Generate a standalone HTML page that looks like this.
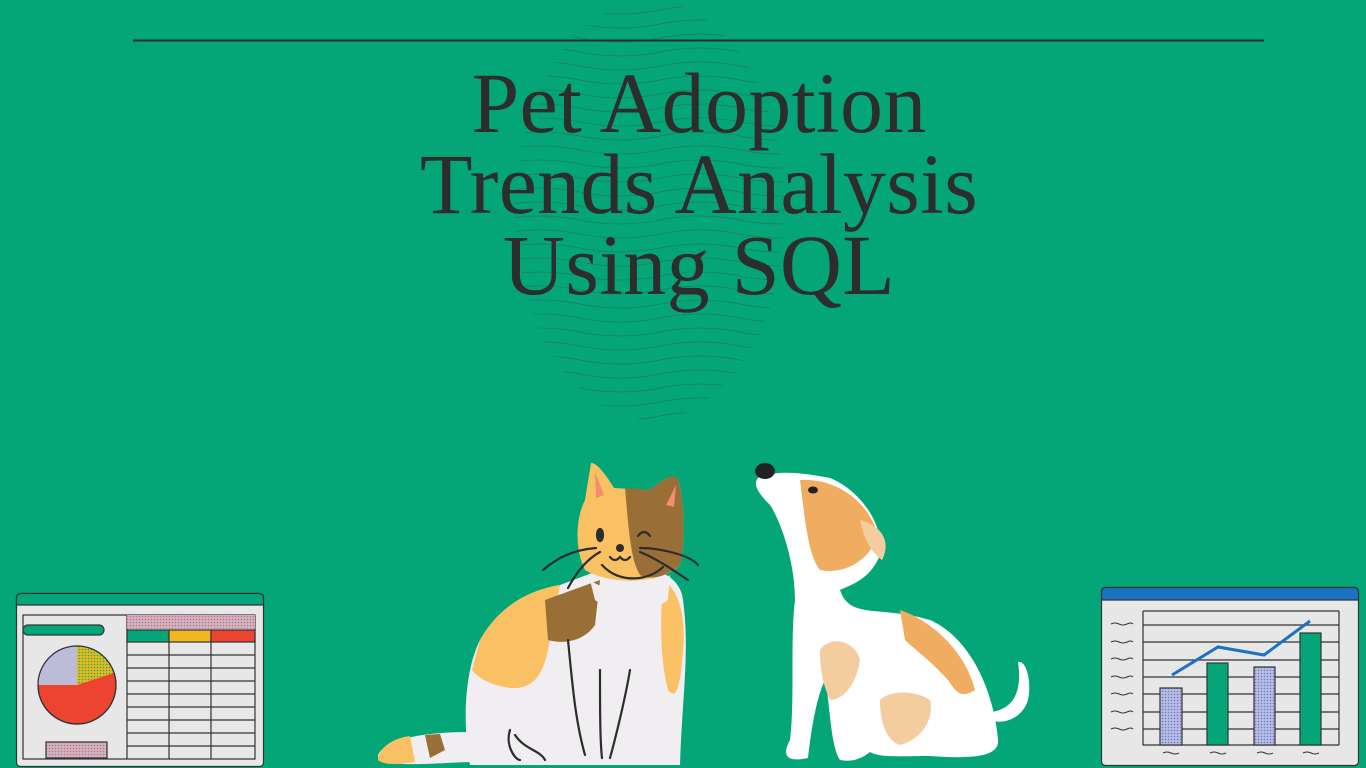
<!DOCTYPE html>
<html><head><meta charset="utf-8"><style>
html,body{margin:0;padding:0}
body{width:1366px;height:768px;background:#04a678;position:relative;overflow:hidden;font-family:"Liberation Serif",serif}
.t{position:absolute;left:16px;width:1366px;text-align:center;color:#2d2d2d;font-size:86px;letter-spacing:0.3px;line-height:1}
svg{position:absolute;left:0;top:0}
</style></head><body>
<svg width="1366" height="768" viewBox="0 0 1366 768">
<defs>
<clipPath id="blob"><ellipse cx="650" cy="210" rx="135" ry="210"/></clipPath>
<pattern id="dots" width="3" height="3" patternUnits="userSpaceOnUse"><rect width="3" height="3" fill="#c8b8c8"/><circle cx="1.5" cy="1.5" r="0.8" fill="#e06070"/></pattern>
<pattern id="dots2" width="3" height="3" patternUnits="userSpaceOnUse"><rect width="3" height="3" fill="#b8bde0"/><circle cx="1.5" cy="1.5" r="0.8" fill="#6a7ad0"/></pattern>
<pattern id="dots3" width="3" height="3" patternUnits="userSpaceOnUse"><rect width="3" height="3" fill="#e2bb20"/><circle cx="1.5" cy="1.5" r="0.8" fill="#3aa060"/></pattern>
</defs>
<g clip-path="url(#blob)" stroke="#2f5f48" stroke-width="0.8" fill="none" opacity="0.55">
<path d="M500 10 q40 -8 80 0 t80 0 t80 0 t80 0"/><path d="M500 24 q40 -8 80 0 t80 0 t80 0 t80 0"/><path d="M500 38 q40 -8 80 0 t80 0 t80 0 t80 0"/><path d="M500 52 q40 -8 80 0 t80 0 t80 0 t80 0"/><path d="M500 66 q40 -8 80 0 t80 0 t80 0 t80 0"/><path d="M500 80 q40 -8 80 0 t80 0 t80 0 t80 0"/><path d="M500 94 q40 -8 80 0 t80 0 t80 0 t80 0"/><path d="M500 108 q40 -8 80 0 t80 0 t80 0 t80 0"/><path d="M500 122 q40 -8 80 0 t80 0 t80 0 t80 0"/><path d="M500 136 q40 -8 80 0 t80 0 t80 0 t80 0"/><path d="M500 150 q40 -8 80 0 t80 0 t80 0 t80 0"/><path d="M500 164 q40 -8 80 0 t80 0 t80 0 t80 0"/><path d="M500 178 q40 -8 80 0 t80 0 t80 0 t80 0"/><path d="M500 192 q40 -8 80 0 t80 0 t80 0 t80 0"/><path d="M500 206 q40 -8 80 0 t80 0 t80 0 t80 0"/><path d="M500 220 q40 -8 80 0 t80 0 t80 0 t80 0"/><path d="M500 234 q40 -8 80 0 t80 0 t80 0 t80 0"/><path d="M500 248 q40 -8 80 0 t80 0 t80 0 t80 0"/><path d="M500 262 q40 -8 80 0 t80 0 t80 0 t80 0"/><path d="M500 276 q40 -8 80 0 t80 0 t80 0 t80 0"/><path d="M500 290 q40 -8 80 0 t80 0 t80 0 t80 0"/><path d="M500 304 q40 -8 80 0 t80 0 t80 0 t80 0"/><path d="M500 318 q40 -8 80 0 t80 0 t80 0 t80 0"/><path d="M500 332 q40 -8 80 0 t80 0 t80 0 t80 0"/><path d="M500 346 q40 -8 80 0 t80 0 t80 0 t80 0"/><path d="M500 360 q40 -8 80 0 t80 0 t80 0 t80 0"/><path d="M500 374 q40 -8 80 0 t80 0 t80 0 t80 0"/><path d="M500 388 q40 -8 80 0 t80 0 t80 0 t80 0"/><path d="M500 402 q40 -8 80 0 t80 0 t80 0 t80 0"/><path d="M500 416 q40 -8 80 0 t80 0 t80 0 t80 0"/>
</g>
<line x1="133" y1="40.5" x2="1264" y2="40.5" stroke="#2d2d2d" stroke-width="2"/>

<!-- left spreadsheet -->
<g stroke="#333" stroke-width="1.2">
<rect x="16.5" y="593.5" width="247" height="173" rx="4" fill="#e6e7e6"/>
<path d="M16.5 605 V597.5 a4 4 0 0 1 4 -4 H259.5 a4 4 0 0 1 4 4 V605 Z" fill="#04a678"/>
<rect x="23" y="615" width="232" height="144" fill="none"/>
<line x1="127" y1="615" x2="127" y2="759"/>
<rect x="127" y="615" width="128" height="14" fill="url(#dots)" stroke="none"/>
<rect x="127" y="630" width="42" height="12" fill="#04a678"/><rect x="169" y="630" width="42" height="12" fill="#f0b820"/><rect x="211" y="630" width="44" height="12" fill="#ec4430"/>
<path d="M127 655H255M127 668H255M127 681H255M127 694H255M127 707H255M127 720H255M127 733H255M127 746H255M169 642V759M211 642V759" fill="none"/>
<rect x="23" y="625" width="81" height="10" rx="5" fill="#04a678"/>
<circle cx="77" cy="685" r="39" fill="#ec4430"/>
<path d="M77 685 V646 A39 39 0 0 0 38 685 Z" fill="#bcbcd8" stroke="none"/>
<path d="M77 685 V646 A39 39 0 0 1 114 673 Z" fill="url(#dots3)" stroke="none"/>
<circle cx="77" cy="685" r="39" fill="none"/>
<rect x="46" y="742" width="61" height="16" fill="url(#dots)"/>
</g>

<!-- right chart -->
<g stroke="#333" stroke-width="1.2">
<rect x="1101.5" y="587.5" width="257" height="178" rx="4" fill="#e6e7e6"/>
<path d="M1101.5 600 V591.5 a4 4 0 0 1 4 -4 H1354.5 a4 4 0 0 1 4 4 V600 Z" fill="#1b72c0"/>
<path d="M1143 611H1339M1143 625H1339M1143 642H1339M1143 660H1339M1143 677H1339M1143 694H1339M1143 712H1339M1143 729H1339M1143 611V745H1339M1339 611V745" fill="none"/>
<rect x="1160" y="688" width="22" height="57" fill="url(#dots2)"/>
<rect x="1207" y="663" width="21" height="82" fill="#04a678"/>
<rect x="1254" y="667" width="21" height="78" fill="url(#dots2)"/>
<rect x="1300" y="633" width="21" height="112" fill="#04a678"/>
</g>
<polyline points="1172,675 1218,647 1264,655 1310,621" fill="none" stroke="#1b72c0" stroke-width="3"/>
<g stroke="#333" stroke-width="1" fill="none">
<path d="M1111 624q4-2 8 0t8 0t6 0M1111 642q4-2 8 0t8 0t6 0M1111 659q4-2 8 0t8 0t6 0M1111 677q4-2 8 0t8 0t6 0M1111 694q4-2 8 0t8 0t6 0M1111 712q4-2 8 0t8 0t6 0M1111 729q4-2 8 0t8 0t6 0M1163 753q4-2 8 0t8 0M1210 753q4-2 8 0t8 0M1257 753q4-2 8 0t8 0M1303 753q4-2 8 0t8 0"/>
</g>

<!-- cat -->
<g>
<path d="M378 755 C385 740 420 732 470 732 L480 762 C440 762 400 768 378 760 Z" fill="#f0eef0"/>
<path d="M378 757 C382 745 395 738 410 736 L415 762 C400 764 385 766 378 760Z" fill="#f9c163"/>
<path d="M425 735 L440 734 L445 750 L430 758Z" fill="#9a6e37"/>
<path d="M470 765 C462 720 465 670 480 640 C500 605 530 590 560 585 L600 570 C640 560 680 570 683 600 C690 650 682 700 680 765 Z" fill="#f0eef0"/>
<path d="M480 640 C500 605 530 590 560 585 L550 640 C545 665 540 690 510 688 C490 685 478 678 472 670 Z" fill="#f9c163"/>
<path d="M545 600 L600 580 L595 625 C585 640 565 645 548 640 Z" fill="#9a6e37"/>
<path d="M663 580 C680 590 686 620 683 650 C680 690 676 700 668 690 C660 660 660 620 663 580Z" fill="#f9c163"/>
<path d="M585 500 L591 463 C597 462 608 478 614 488 L650 490 C664 478 672 475 678 478 C684 500 686 540 680 565 C660 585 610 585 585 570 C575 550 575 520 585 500Z" fill="#f9c163"/>
<path d="M625 488 L650 490 C664 478 672 475 678 478 C684 500 686 540 680 565 C665 578 650 580 640 575 C630 560 628 520 625 488Z" fill="#9a6e37"/>
<path d="M595 472 L604 495 L596 498Z" fill="#f48c70"/><path d="M676 485 L666 505 L674 507Z" fill="#f48c70"/>
<path d="M590 580 C610 595 650 595 670 575 L668 600 C650 615 610 612 595 600 Z" fill="#f0eef0"/>
<g stroke="#2d2d2d" stroke-width="2.2" fill="none" stroke-linecap="round">
<ellipse cx="600" cy="535" rx="3" ry="6" fill="#2d2d2d"/>
<path d="M638 536q6-8 12 0"/>
<path d="M596 548 C570 550 555 560 543 570M600 552 C585 560 575 575 568 588M640 548 C660 548 690 555 698 565M640 552 C660 560 680 575 688 580"/>
<path d="M610 557q5 6 10 0q5 6 10 0M602 565 C620 585 650 580 663 567"/>
<path d="M568 640 C572 680 575 720 585 755M600 670 C600 710 600 740 602 758M630 670 C625 700 615 740 610 758M515 735 C525 750 540 750 545 760M510 730 C505 745 515 760 520 760"/>
</g>
<circle cx="620" cy="548" r="4" fill="#2d2d2d"/>
</g>

<!-- dog -->
<g>
<path d="M758 478 C775 470 800 472 830 478 C860 490 885 525 880 555 C870 580 850 585 840 590 C850 620 880 605 930 620 C975 640 995 700 998 740 C1000 760 960 758 930 756 C900 756 880 758 870 752 C860 760 850 762 840 760 C830 745 830 700 825 680 C815 700 810 740 808 758 C790 762 780 758 790 740 C795 700 790 640 795 600 C795 560 780 520 770 505 C760 495 752 485 758 478Z" fill="#ffffff"/>
<path d="M800 480 C840 478 870 505 878 535 C870 560 845 575 820 570 C808 555 805 520 800 480Z" fill="#f0ad62"/>
<path d="M860 520 C880 525 892 540 882 560 C875 555 865 545 860 520Z" fill="#f3cca0"/>
<path d="M900 610 C930 620 965 650 975 690 C960 700 955 690 948 680 C930 660 915 650 905 640Z" fill="#f0ad62"/>
<path d="M820 650 C830 635 855 640 860 660 C855 690 840 700 830 700 C823 685 820 670 820 650Z" fill="#f3cca0"/>
<path d="M880 700 C890 690 915 690 930 700 C935 720 920 740 900 745 C885 740 880 720 880 700Z" fill="#f3cca0"/>
<path d="M992 712 C1015 708 1022 690 1018 662 C1026 660 1032 680 1028 700 C1022 720 1000 725 992 720Z" fill="#ffffff"/>
<ellipse cx="765" cy="471" rx="10" ry="8" fill="#222"/>
<ellipse cx="813" cy="490" rx="5" ry="3.5" fill="#222"/>
</g>
</svg>
<div class="t" style="top:60px">Pet Adoption</div>
<div class="t" style="top:141px">Trends Analysis</div>
<div class="t" style="top:222px">Using SQL</div>
</body></html>
